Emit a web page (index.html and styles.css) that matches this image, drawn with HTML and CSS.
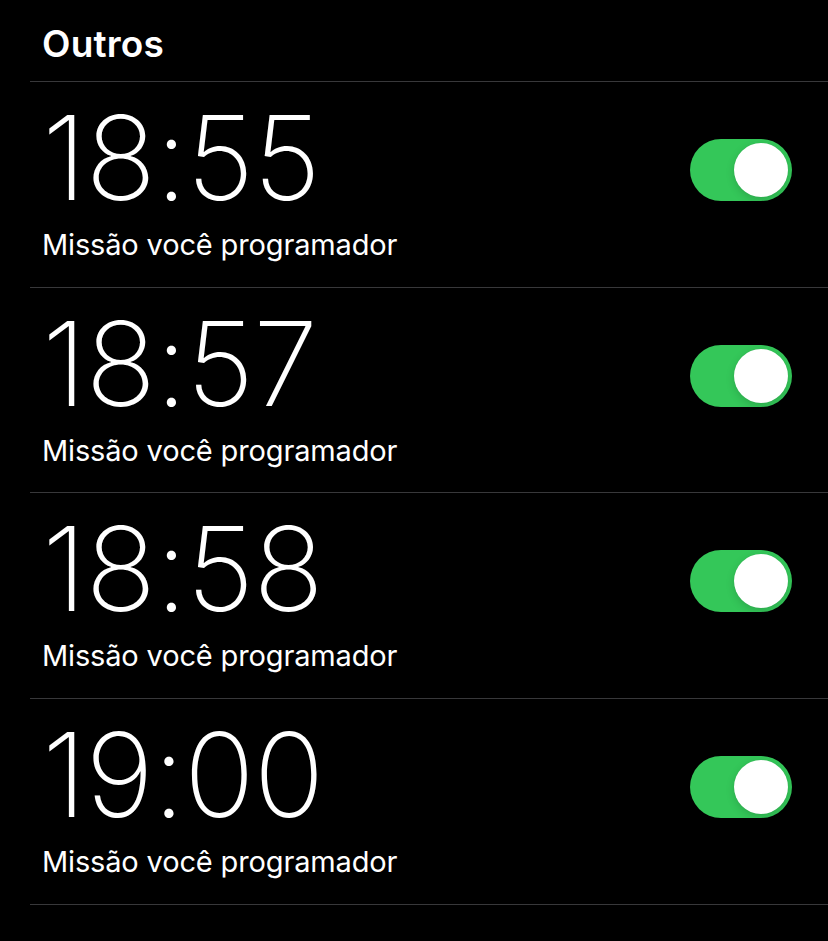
FILE: index.html
```html
<!DOCTYPE html>
<html lang="pt">
<head>
<meta charset="utf-8">
<title>Alarmes</title>
<link rel="stylesheet" href="styles.css">
</head>
<body>
<div class="screen">
  <h2 class="section-title">Outros</h2>
  <ul class="alarm-list">
    <li class="alarm">
      <div class="alarm-text">
        <div class="alarm-time">18:55</div>
        <div class="alarm-label">Missão você programador</div>
      </div>
      <span class="toggle on"><span class="knob"></span></span>
    </li>
    <li class="alarm">
      <div class="alarm-text">
        <div class="alarm-time">18:57</div>
        <div class="alarm-label">Missão você programador</div>
      </div>
      <span class="toggle on"><span class="knob"></span></span>
    </li>
    <li class="alarm">
      <div class="alarm-text">
        <div class="alarm-time">18:58</div>
        <div class="alarm-label">Missão você programador</div>
      </div>
      <span class="toggle on"><span class="knob"></span></span>
    </li>
    <li class="alarm">
      <div class="alarm-text">
        <div class="alarm-time">19:00</div>
        <div class="alarm-label">Missão você programador</div>
      </div>
      <span class="toggle on"><span class="knob"></span></span>
    </li>
  </ul>
</div>
</body>
</html>
```
FILE: styles.css
```css
html, body {
  margin: 0;
  padding: 0;
  background: #000;
}
body {
  width: 828px;
  height: 941px;
  overflow: hidden;
  color: #fff;
  font-family: Inter, "Liberation Sans", sans-serif;
}
.screen {
  padding-top: 26px;
}
.section-title {
  margin: 0;
  padding: 0 0 19px 42px;
  font-size: 37px;
  line-height: 36px;
  font-weight: 600;
  letter-spacing: 0.2px;
}
.alarm-list {
  list-style: none;
  margin: 0 0 0 30px;
  padding: 0;
}
.alarm {
  border-top: 1px solid #38383a;
  height: 204.7px;
  display: flex;
  justify-content: space-between;
  align-items: flex-start;
  padding: 0 36px 0 12px;
}
.alarm:last-child {
  border-bottom: 1px solid #38383a;
}
.alarm-text {
  padding-top: 17px;
}
.alarm-time {
  font-size: 117px;
  line-height: 117px;
  font-weight: 200;
  letter-spacing: -1px;
}
.alarm-label {
  margin-top: 14px;
  font-size: 29px;
  line-height: 29px;
  font-weight: 400;
  letter-spacing: -0.15px;
}
.toggle {
  margin-top: 57px;
  width: 102px;
  height: 62px;
  border-radius: 31px;
  background: #34c759;
  display: flex;
  align-items: center;
  justify-content: flex-end;
  padding: 0 4px;
  box-sizing: border-box;
}
.knob {
  width: 54px;
  height: 54px;
  border-radius: 50%;
  background: #fff;
  box-shadow: 0 3px 8px rgba(0, 0, 0, 0.15), 0 0 1px rgba(0, 0, 0, 0.1);
}
```
